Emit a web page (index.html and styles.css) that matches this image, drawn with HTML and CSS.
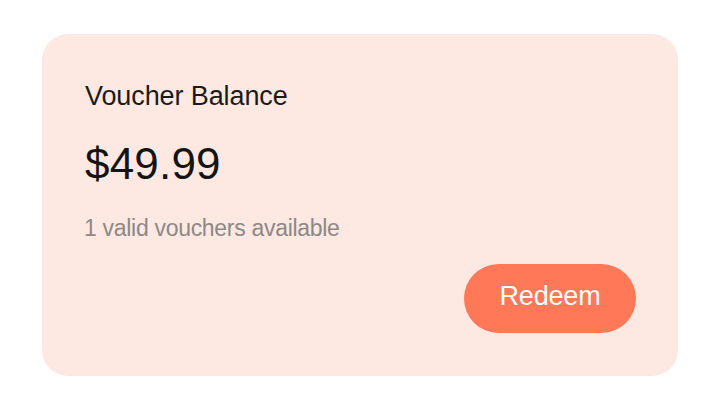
FILE: index.html
```html
<!DOCTYPE html>
<html>
<head>
<meta charset="utf-8">
<link rel="stylesheet" href="styles.css">
</head>
<body>
<div class="page">
  <div class="card">
    <div class="title">Voucher Balance</div>
    <div class="amount">$49.99</div>
    <div class="sub">1 valid vouchers available</div>
    <div class="actions">
      <button class="btn">Redeem</button>
    </div>
  </div>
</div>
</body>
</html>
```
FILE: styles.css
```css
html, body {
  margin: 0;
  padding: 0;
  background: #ffffff;
}
body {
  font-family: "Liberation Sans", Arial, sans-serif;
  width: 720px;
  height: 416px;
}
.page {
  padding: 34px 42px 40px 42px;
}
.card {
  background: #fee9e2;
  border-radius: 26px;
  height: 342px;
  box-sizing: border-box;
  padding: 46px 42px 43px 43px;
  display: flex;
  flex-direction: column;
}
.title {
  font-size: 27px;
  line-height: 32px;
  color: #1a1a1a;
  letter-spacing: -0.1px;
}
.amount {
  font-size: 44px;
  line-height: 52px;
  color: #141414;
  letter-spacing: 0.2px;
  margin-top: 26px;
}
.sub {
  font-size: 23px;
  line-height: 28px;
  color: #8c8886;
  letter-spacing: -0.3px;
  margin-top: 24px;
  margin-left: -1px;
}
.actions {
  margin-top: auto;
  display: flex;
  justify-content: flex-end;
}
.btn {
  font-family: "Liberation Sans", Arial, sans-serif;
  background: #ff7858;
  color: #ffffff;
  border: none;
  border-radius: 35px;
  width: 172px;
  height: 69px;
  font-size: 27px;
  letter-spacing: -0.2px;
  padding: 0 0 4px 0;
}
```
